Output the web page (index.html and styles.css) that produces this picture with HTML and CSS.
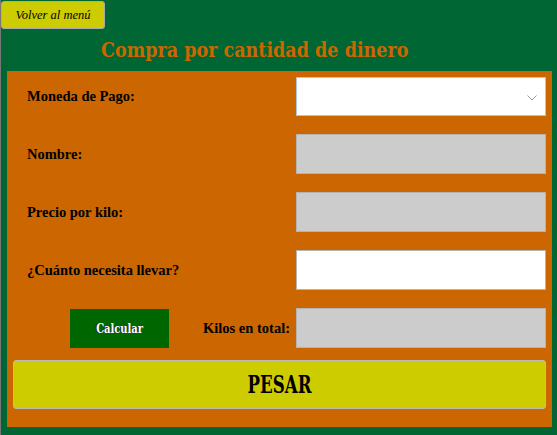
FILE: index.html
```html
<!DOCTYPE html>
<html lang="es">
<head>
<meta charset="utf-8">
<title>Compra por cantidad de dinero</title>
<link rel="stylesheet" href="styles.css">
</head>
<body>
<div class="page">
  <button class="back-btn" type="button">Volver al menú</button>
  <h1 class="title">Compra por cantidad de dinero</h1>
  <div class="panel">
    <div class="form-grid">
      <label class="label">Moneda de Pago:</label>
      <div class="select-box"><svg class="chev" width="10" height="6" viewBox="0 0 10 6"><path d="M0.5 0.5 L5 5 L9.5 0.5" fill="none" stroke="#999" stroke-width="1"/></svg></div>

      <label class="label">Nombre:</label>
      <div class="field field-disabled"></div>

      <label class="label">Precio por kilo:</label>
      <div class="field field-disabled"></div>

      <label class="label">¿Cuánto necesita llevar?</label>
      <div class="field field-white"></div>

      <div class="calc-row">
        <button class="calc-btn" type="button"><span class="narrow">Calcular</span></button>
        <label class="label total-label">Kilos en total:</label>
      </div>
      <div class="field field-disabled"></div>
    </div>
    <button class="pesar-btn" type="button"><span class="narrow-pesar">PESAR</span></button>
  </div>
</div>
</body>
</html>
```
FILE: styles.css
```css
html, body {
  margin: 0;
  padding: 0;
  background: #006633;
}
body {
  font-family: "Liberation Serif", "Times New Roman", serif;
}
.page {
  width: 557px;
  height: 435px;
  box-sizing: border-box;
  border-left: 1px solid #777;
  padding-top: 1px;
}
.back-btn {
  display: block;
  width: 104px;
  height: 28px;
  margin: 0;
  background: #cccc00;
  border: 1px solid #aaa;
  border-radius: 3px;
  font-family: "Liberation Serif", serif;
  font-style: italic;
  font-size: 12.5px;
  color: #000;
  padding: 0;
}
.title {
  margin: 11px 0 0 100px;
  height: 31px;
  font-family: "DejaVu Serif Condensed", "DejaVu Serif", serif;
  font-weight: bold;
  font-size: 19.5px;
  line-height: 22px;
  color: #cc6600;
}
.panel {
  margin-left: 6px;
  width: 545px;
  height: 356px;
  box-sizing: border-box;
  background: #cc6600;
  padding: 6px 6px 0 6px;
}
.form-grid {
  display: grid;
  grid-template-columns: 1fr 250px;
  grid-template-rows: 39px 40px 40px 40px 40px;
  row-gap: 18px;
  padding-left: 14px;
}
.label {
  display: flex;
  align-items: center;
  font-weight: bold;
  font-size: 14.5px;
  color: #000;
}
.select-box {
  box-sizing: border-box;
  background: #fff;
  border: 1px solid #a6c8e8;
  display: flex;
  align-items: center;
  justify-content: flex-end;
  padding-right: 8px;
  padding-top: 2px;
}
.field {
  box-sizing: border-box;
  border: 1px solid #b4b4b4;
}
.field-disabled { background: #cccccc; }
.field-white { background: #ffffff; }
.calc-row {
  display: flex;
  align-items: center;
  padding-left: 43px;
}
.calc-btn {
  width: 99px;
  height: 39px;
  margin-top: 1px;
  background: #006600;
  border: none;
  color: #fff;
  font-family: "DejaVu Serif Condensed", "DejaVu Serif", serif;
  font-weight: bold;
  font-size: 13px;
  text-shadow: -1px 0 0 #223;
  padding: 0;
}
.narrow {
  display: inline-block;
  transform: scaleX(0.85);
}
.narrow-pesar {
  display: inline-block;
  transform: scaleX(0.77);
}
.total-label {
  margin-left: auto;
  margin-right: 6px;
}
.pesar-btn {
  display: block;
  width: 533px;
  height: 49px;
  margin-top: 12px;
  background: #cccc00;
  border: 1px solid #bbb;
  border-radius: 3px;
  font-family: "DejaVu Serif Condensed", "DejaVu Serif", serif;
  font-weight: bold;
  font-size: 24px;
  color: #000;
  padding: 0;
}
```
